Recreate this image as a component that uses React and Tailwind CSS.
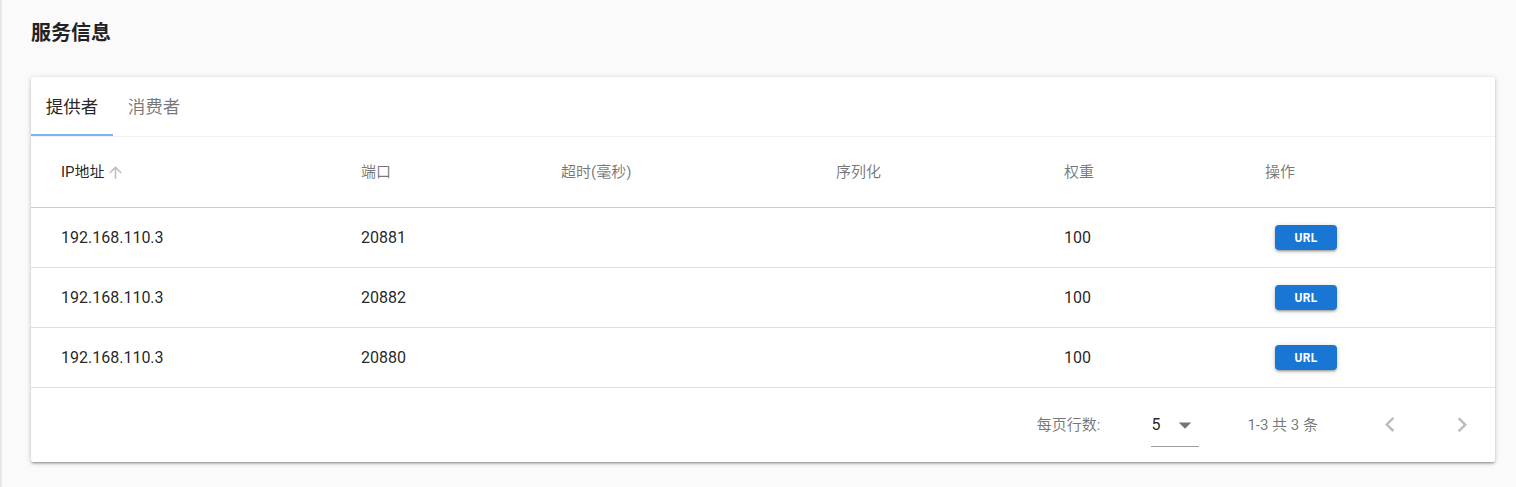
import React from "react";

const font = { fontFamily: 'Roboto, "Noto Sans CJK SC", "Noto Sans", sans-serif' };

const rows = [
  { ip: "192.168.110.3", port: "20881", weight: "100" },
  { ip: "192.168.110.3", port: "20882", weight: "100" },
  { ip: "192.168.110.3", port: "20880", weight: "100" },
];

const cols = "grid grid-cols-[300px_200px_275px_228px_201px_1fr]";

function ChevronLeft() {
  return (
    <svg width="30" height="30" viewBox="0 0 24 24" fill="rgba(0,0,0,0.26)">
      <path d="M15.41 16.09l-4.58-4.59 4.58-4.59L14 5.5l-6 6 6 6z" />
    </svg>
  );
}
function ChevronRight() {
  return (
    <svg width="30" height="30" viewBox="0 0 24 24" fill="rgba(0,0,0,0.26)">
      <path d="M8.59 16.34l4.58-4.59-4.58-4.59L10 5.75l6 6-6 6z" />
    </svg>
  );
}

export default function App() {
  return (
    <div
      className="min-h-[487px] w-full bg-[#fafafa] border-l-2 border-[#e8e8e8] pl-[29px] pr-[21px] pt-[21px]"
      style={font}
    >
      <h1 className="text-[20px] leading-[24px] font-bold text-[#222] h-[24px]">服务信息</h1>
      <div className="mt-[32px] bg-white rounded-[2px] shadow-[0_1px_5px_rgba(0,0,0,0.2),0_2px_2px_rgba(0,0,0,0.14),0_3px_1px_-2px_rgba(0,0,0,0.12)]">
        {/* Tabs */}
        <div className="flex h-[60px] border-b border-[#f2f2f2]">
          <div className="relative w-[82px] flex items-center justify-center pt-[2px] text-[17.5px] text-[rgba(0,0,0,0.87)]">
            提供者
            <div className="absolute left-0 right-0 bottom-0 h-[2px] bg-[#80b2f2]" />
          </div>
          <div className="w-[82px] flex items-center justify-center pt-[2px] text-[17.5px] text-[rgba(0,0,0,0.54)]">
            消费者
          </div>
        </div>
        {/* Header */}
        <div className={`${cols} h-[71px] items-center border-b border-[#cccccc] text-[15px] text-[rgba(0,0,0,0.54)]`}>
          <div className="pl-[30px] flex items-center text-[rgba(0,0,0,0.87)]">
            IP地址
            <svg className="ml-[1px]" width="19" height="19" viewBox="0 0 24 24" fill="rgba(0,0,0,0.25)">
              <path d="M4 12l1.41 1.41L11 7.83V20h2V7.83l5.58 5.59L20 12l-8-8-8 8z" />
            </svg>
          </div>
          <div className="pl-[30px]">端口</div>
          <div className="pl-[30px]">超时(毫秒)</div>
          <div className="pl-[30px]">序列化</div>
          <div className="pl-[30px]">权重</div>
          <div className="pl-[30px]">操作</div>
        </div>
        {/* Rows */}
        {rows.map((r, i) => (
          <div
            key={i}
            className={`${cols} h-[60px] items-center border-b border-[#e0e0e0] text-[16px] text-[rgba(0,0,0,0.87)]`}
          >
            <div className="pl-[30px]">{r.ip}</div>
            <div className="pl-[30px]">{r.port}</div>
            <div className="pl-[30px]"></div>
            <div className="pl-[30px]"></div>
            <div className="pl-[30px]">{r.weight}</div>
            <div className="pl-[40px]">
              <button className="w-[62px] h-[25px] rounded-[4px] bg-[#1976d2] text-white text-[12px] font-bold tracking-[0.3px] shadow-[0_1px_5px_rgba(0,0,0,0.2),0_2px_2px_rgba(0,0,0,0.14),0_3px_1px_-2px_rgba(0,0,0,0.12)] flex items-center justify-center" style={font}>
                URL
              </button>
            </div>
          </div>
        ))}
        {/* Footer */}
        <div className="h-[74px] flex items-center justify-end pr-[3px] text-[15px] text-[rgba(0,0,0,0.54)]">
          <span>每页行数:</span>
          <div className="ml-[51px] relative h-[43px] w-[48px] flex items-center border-b border-[#9e9e9e] mt-[0px]">
            <span className="text-[16px] text-[rgba(0,0,0,0.87)]">5</span>
            <svg className="absolute left-[19px] top-[6px]" width="30" height="30" viewBox="0 0 24 24" fill="rgba(0,0,0,0.54)">
              <path d="M7 10l5 5 5-5z" />
            </svg>
          </div>
          <span className="ml-[48px]">1-3 共 3 条</span>
          <div className="ml-[42px] w-[60px] h-[60px] flex items-center justify-center">
            <ChevronLeft />
          </div>
          <div className="ml-[12px] w-[60px] h-[60px] flex items-center justify-center">
            <ChevronRight />
          </div>
        </div>
      </div>
    </div>
  );
}
